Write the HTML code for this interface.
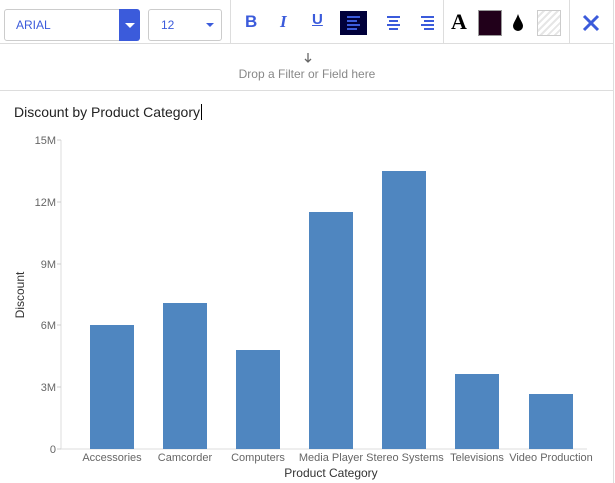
<!DOCTYPE html><html><head><style>
body{margin:0;width:615px;height:483px;background:#fff;font-family:"Liberation Sans",Arial,sans-serif;position:relative;overflow:hidden}
.a{position:absolute}
</style></head><body>
<div class="a" style="left:0;top:0;width:614px;height:44px;border:1px solid #ddd;border-width:0 1px 1px 0;box-sizing:border-box;background:#fff"></div>
<div class="a" style="left:230px;top:0;width:1px;height:44px;background:#ddd"></div>
<div class="a" style="left:443px;top:0;width:1px;height:44px;background:#ddd"></div>
<div class="a" style="left:569px;top:0;width:1px;height:44px;background:#ddd"></div>
<div class="a" style="left:4px;top:9px;width:135px;height:32px;border:1px solid #ccc;border-radius:3px;box-sizing:border-box;font-size:12px;color:#3b5bdb;line-height:30px;padding-left:11px">ARIAL</div>
<div class="a" style="left:119px;top:9px;width:21px;height:32px;background:#3b5bdb;border-radius:0 3px 3px 0"></div>
<div class="a" style="left:125px;top:23px;border:5px solid transparent;border-top:5px solid #fff;border-bottom:0"></div>
<div class="a" style="left:148px;top:9px;width:74px;height:32px;border:1px solid #ccc;border-radius:3px;box-sizing:border-box;font-size:12px;color:#3b5bdb;line-height:30px;padding-left:12px">12</div>
<div class="a" style="left:206px;top:23px;border:4px solid transparent;border-top:4px solid #3b5bdb;border-bottom:0"></div>
<div class="a" style="left:245px;top:12px;font:bold 17px 'Liberation Sans';color:#3b5bdb">B</div>
<div class="a" style="left:280px;top:12px;font:bold italic 17px 'Liberation Serif';color:#3b5bdb">I</div>
<div class="a" style="left:312px;top:11px;font:bold 15px 'Liberation Sans';color:#3b5bdb;text-decoration:underline">U</div>
<div class="a" style="left:340px;top:11px;width:27px;height:24px;background:#00003a"></div>
<svg class="a" style="left:340px;top:11px" width="130" height="24"><g stroke="#3b5bdb" stroke-width="2"><path d="M7 6h13M7 10h10M7 14h13M7 18h10"/><path d="M47 6h13M49 10h9M47 14h13M49 18h9"/><path d="M81 6h13M84 10h10M81 14h13M84 18h10"/></g></svg>
<div class="a" style="left:451px;top:9px;font:bold 22px 'Liberation Serif';color:#000">A</div>
<div class="a" style="left:478px;top:10px;width:24px;height:26px;background:#21001a;border:1px solid #999;box-sizing:border-box"></div>
<svg class="a" style="left:511px;top:13px" width="14" height="20"><path d="M7 1C5 7 2 10 2 13a5 5 0 0010 0C12 10 9 7 7 1z" fill="#000"/></svg>
<div class="a" style="left:537px;top:10px;width:24px;height:26px;border:1px solid #ccc;box-sizing:border-box;background:repeating-linear-gradient(135deg,#fff 0 3px,#e6e6e6 3px 5px)"></div>
<svg class="a" style="left:582px;top:14px" width="18" height="18"><path d="M2 2L16 16M16 2L2 16" stroke="#3b5bdb" stroke-width="3"/></svg>
<div class="a" style="left:613px;top:44px;width:1px;height:439px;background:#ddd"></div>
<div class="a" style="left:0;top:90px;width:614px;height:1px;background:#ddd"></div>
<svg class="a" style="left:303px;top:52px" width="10" height="12"><path d="M5 1V10M2 7L5 10L8 7" stroke="#666" stroke-width="1.3" fill="none"/></svg>
<div class="a" style="left:0;top:67px;width:614px;text-align:center;font-size:12px;color:#888">Drop a Filter or Field here</div>
<div class="a" style="left:14px;top:104px;font-size:14px;color:#222">Discount by Product Category<span style="border-left:1px solid #000;margin-left:1px"></span></div>
<svg class="a" style="left:0;top:120px" width="612" height="363" font-family="Liberation Sans" font-size="11" fill="#666">
<path d="M61 20V329H587" stroke="#ddd" fill="none"/>
<g stroke="#ccc"><path d="M57 20h4M57 82h4M57 144h4M57 205h4M57 267h4M57 329h4"/></g>
<g text-anchor="end"><text x="56" y="24">15M</text><text x="56" y="86">12M</text><text x="56" y="148">9M</text><text x="56" y="209">6M</text><text x="56" y="271">3M</text><text x="56" y="333">0</text></g>
<text transform="translate(24 175) rotate(-90)" text-anchor="middle" font-size="12" fill="#333">Discount</text>
<g fill="#4f86c0"><rect x="90" y="205" width="44" height="124"/><rect x="163" y="183" width="44" height="146"/><rect x="236" y="230" width="44" height="99"/><rect x="309" y="92" width="44" height="237"/><rect x="382" y="51" width="44" height="278"/><rect x="455" y="254" width="44" height="75"/><rect x="529" y="274" width="44" height="55"/></g>
<g text-anchor="middle"><text x="112" y="341">Accessories</text><text x="185" y="341">Camcorder</text><text x="258" y="341">Computers</text><text x="331" y="341">Media Player</text><text x="405" y="341">Stereo Systems</text><text x="477" y="341">Televisions</text><text x="551" y="341">Video Production</text></g>
<text x="331" y="357" text-anchor="middle" font-size="12" fill="#333">Product Category</text>
</svg>
</body></html>
